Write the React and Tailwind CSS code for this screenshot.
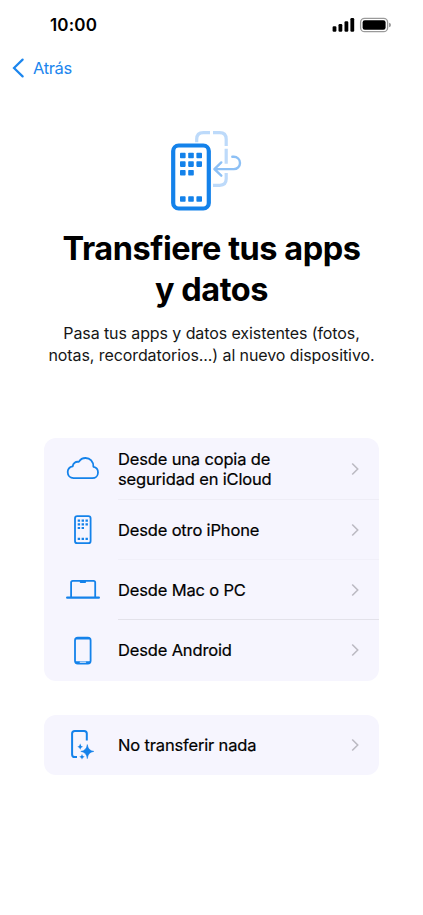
import React from 'react';

const CloudIcon = () => (
    <svg width="34" height="30" viewBox="66 454 34 30" fill="none" stroke="#1482ea" strokeWidth="1.8" strokeLinejoin="round">
        <path d="M73.6 478.2H92.2C95.6 478.2 98 475.6 98 472.4C98 469.4 96 467.2 93.4 466.8C93.5 461.6 90 458 85.6 458C82.4 458 80.2 459.5 78.8 461.9C75.6 461.2 73 463.2 72.7 466.3C69.6 466.9 67.7 469.1 67.7 472.1C67.7 475.6 70.2 478.2 73.6 478.2Z" />
    </svg>
);

const IphoneIcon = () => (
    <svg width="34" height="30" viewBox="66 515 34 30" fill="none">
        <rect x="75" y="516.2" width="15.6" height="27" rx="2.3" stroke="#1482ea" strokeWidth="1.8" />
        <path d="M77.7 520.6H88M77.7 524.3H88M77.7 528H84.2M77.7 538.9H88" stroke="#1482ea" strokeWidth="2.2" strokeDasharray="2.4 1.5" />
    </svg>
);

const LaptopIcon = () => (
    <svg width="34" height="30" viewBox="66 575 34 30" fill="none">
        <path d="M71.1 597V582.6Q71.1 580.9 72.8 580.9H93.5Q95.2 580.9 95.2 582.6V597" stroke="#1482ea" strokeWidth="1.8" />
        <path d="M79.8 581H86V582.2Q86 583 85.2 583H80.6Q79.8 583 79.8 582.2Z" fill="#1482ea" />
        <path d="M67.2 597.6H98.8" stroke="#1482ea" strokeWidth="2.4" strokeLinecap="round" />
    </svg>
);

const AndroidIcon = () => (
    <svg width="34" height="30" viewBox="66 635.5 34 30" fill="none">
        <rect x="75" y="637.2" width="15.6" height="25.8" rx="2.8" stroke="#1482ea" strokeWidth="1.8" />
        <path d="M76 638H89.6M75.6 661.7H90" stroke="#1482ea" strokeWidth="2" />
        <path d="M80.3 661.8H85.5" stroke="#b5d5f8" strokeWidth="1.4" strokeLinecap="round" />
    </svg>
);

const SparkleIcon = () => (
    <svg width="34" height="32" viewBox="66 729 34 32" fill="#1482ea">
        <path d="M86.8 740.5V733.6Q86.8 730.9 84.1 730.9H74.8Q72.1 730.9 72.1 733.6V754.4Q72.1 757.1 74.8 757.1H77" fill="none" stroke="#1482ea" strokeWidth="2" />
        <path d="M87.3 744.6Q88 750.8 93.8 751.4Q88 752 87.3 758.6Q86.6 752 80.8 751.4Q86.6 750.8 87.3 744.6Z" stroke="#1482ea" strokeWidth="0.6" />
        <path d="M80.2 743.6Q80.5 746.3 83 746.7Q80.5 747.1 80.2 749.7Q79.9 747.1 77.4 746.7Q79.9 746.3 80.2 743.6Z" />
        <path d="M82 754Q82.3 756.4 84.7 756.8Q82.3 757.2 82 759.6Q81.7 757.2 79.3 756.8Q81.7 756.4 82 754Z" />
    </svg>
);

const TransferIcon = () => (
    <svg width="85" height="90" viewBox="165 125 85 90" fill="none" className="shrink-0">
        <path
            d="M196.7 142.2V139.2Q196.7 132.6 203.3 132.6H210M213 132.6H219.7Q226.2 132.6 226.2 139.2V146M226.2 148.8V163.8M226.2 173V178.8Q226.2 185.3 219.7 185.3H213"
            stroke="#bddafa"
            strokeWidth="3.2"
        />
        <path
            d="M232.3 156.7H233.8A6.2 6.2 0 0 1 233.8 169.1H214.6M221.3 162.4L214.4 169.1L221.3 175.7"
            stroke="#8dc0f5"
            strokeWidth="2.4"
            strokeLinecap="round"
            strokeLinejoin="round"
        />
        <rect x="173.2" y="145.5" width="35.6" height="63" rx="5.5" fill="#fff" stroke="#1482ea" strokeWidth="4.2" />
        {[[180, 152.7], [188.2, 152.7], [196.4, 152.7], [180, 161.3], [188.2, 161.3], [196.4, 161.3], [180, 170], [188.2, 170], [180, 196.2], [188.2, 196.2], [196.4, 196.2]].map(([x, y]) => (
            <rect key={`${x}-${y}`} x={x} y={y} width="5.6" height="5.6" rx="0.8" fill="#1482ea" />
        ))}
    </svg>
);

const Chevron = () => (
    <svg width="8" height="14" viewBox="0 0 8 14" fill="none" className="mr-5 ml-auto shrink-0">
        <path d="M1.2 1.5L6.7 7L1.2 12.5" stroke="#bcbbc3" strokeWidth="1.6" />
    </svg>
);

const Row = ({ icon, label, height, divider }) => (
    <button className={`flex w-full text-left ${height}`}>
        <span className="flex w-[74px] shrink-0 items-center pl-[22px]">{icon}</span>
        <span className={`flex flex-1 items-center self-stretch border-b ${divider || 'border-transparent'}`}>
            <span className="text-[16.5px] leading-5 tracking-[-0.16px] whitespace-pre-line [-webkit-text-stroke:0.2px]">{label}</span>
            <Chevron />
        </span>
    </button>
);

const sources = [
    { icon: <CloudIcon />, label: 'Desde una copia de\nseguridad en iCloud', height: 'h-[62px]', divider: 'border-[#eeedf6]' },
    { icon: <IphoneIcon />, label: 'Desde otro iPhone', height: 'h-[60px]', divider: 'border-[#f1f0f9]' },
    { icon: <LaptopIcon />, label: 'Desde Mac o PC', height: 'h-[60px]', divider: 'border-[#e3e2ea]' },
    { icon: <AndroidIcon />, label: 'Desde Android', height: 'h-[61px]' }
];

const App = () => {
    return (
        <div className="flex h-[915px] w-[423px] flex-col bg-white font-['Inter',sans-serif] text-black">
            <header className="flex h-[50px] items-center justify-between pr-8 pl-[50px]">
                <span className="pt-[2px] text-[17px] font-semibold tracking-[0.15px]">10:00</span>
                <svg width="60" height="16" viewBox="331 17 60 16" className="shrink-0">
                    <rect x="332.6" y="26.3" width="3.8" height="5.4" rx="1.2" />
                    <rect x="338.5" y="24" width="3.8" height="7.7" rx="1.2" />
                    <rect x="344.5" y="21.2" width="3.8" height="10.5" rx="1.2" />
                    <rect x="350.4" y="18" width="3.8" height="13.7" rx="1.2" />
                    <rect x="360.6" y="18.3" width="27" height="13.4" rx="4" fill="none" stroke="#9a9a9a" strokeWidth="1.3" />
                    <rect x="362.6" y="20.2" width="23" height="9.5" rx="2.2" />
                    <path d="M389 22.8Q391 23.2 391 25T389 27.2Z" fill="#9a9a9a" />
                </svg>
            </header>

            <nav className="flex h-9 items-center gap-[9px] pl-3 text-[#1c86ee]">
                <svg width="12" height="20" viewBox="0 0 12 20" fill="none" stroke="currentColor" strokeWidth="2.2" strokeLinecap="round">
                    <path d="M10.6 1.6L2 10L10.6 18.4" />
                </svg>
                <span className="pt-px text-[16.5px] tracking-[-0.35px]">Atrás</span>
            </nav>

            <main className="flex flex-col items-center pt-[39px]">
                <div className="flex w-full pl-[165px]">
                    <TransferIcon />
                </div>
                <h1 className="mt-[13px] text-center text-[32.5px] leading-[41px] font-bold tracking-[-0.48px]">
                    Transfiere tus apps<br />y datos
                </h1>
                <p className="mt-3 text-center text-[16px] leading-[22px] tracking-[-0.09px] whitespace-nowrap text-[#161616]">
                    Pasa tus apps y datos existentes (fotos,<br />notas, recordatorios...) al nuevo dispositivo.
                </p>

                <section className="mt-[72px] w-[335px] overflow-hidden rounded-xl bg-[#f6f5fe]">
                    {sources.map((source) => (
                        <Row key={source.label} {...source} />
                    ))}
                </section>
                <section className="mt-[34px] w-[335px] overflow-hidden rounded-xl bg-[#f6f5fe]">
                    <Row icon={<SparkleIcon />} label="No transferir nada" height="h-[60px]" />
                </section>
            </main>
        </div>
    );
};

export default App;
